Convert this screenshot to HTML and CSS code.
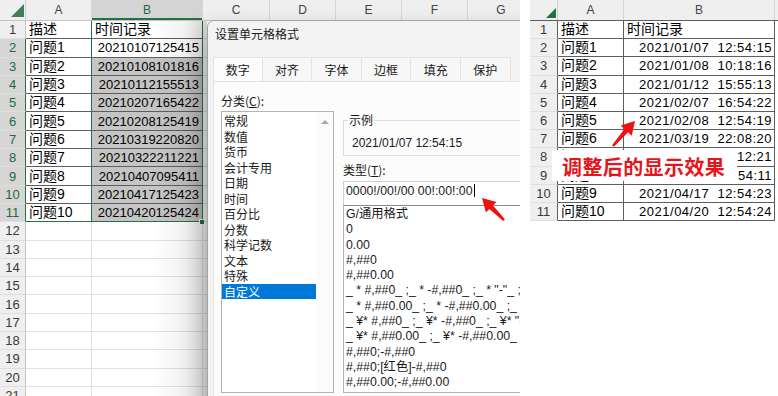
FILE: index.html
```html
<!DOCTYPE html>
<html lang="zh-CN">
<head>
<meta charset="utf-8">
<title>设置单元格格式</title>
<link rel="stylesheet" href="styles.css">
</head>
<body>
<div class="stage">
  <section class="shot left">
    <div class="sheet">
      <div class="hrow">
        <div class="corner"><span class="tri"></span></div>
        <div class="ch w-a">A</div>
        <div class="ch w-b sel">B</div>
        <div class="ch w-x">C</div>
        <div class="ch w-y">D</div>
        <div class="ch w-y">E</div>
        <div class="ch w-y">F</div>
        <div class="ch w-x">G</div>
      </div>
      <div class="row"><div class="rh">1</div><div class="c w-a t gr">描述</div><div class="c w-b t gr">时间记录</div><div class="c w-x"></div></div>
      <div class="row"><div class="rh s">2</div><div class="c w-a t gr">问题1</div><div class="c w-b t gr n">20210107125415</div><div class="c w-x"></div></div>
      <div class="row"><div class="rh s">3</div><div class="c w-a t gr">问题2</div><div class="c w-b t gr n fill">20210108101816</div><div class="c w-x"></div></div>
      <div class="row"><div class="rh s">4</div><div class="c w-a t gr">问题3</div><div class="c w-b t gr n fill">20210112155513</div><div class="c w-x"></div></div>
      <div class="row"><div class="rh s">5</div><div class="c w-a t gr">问题4</div><div class="c w-b t gr n fill">20210207165422</div><div class="c w-x"></div></div>
      <div class="row"><div class="rh s">6</div><div class="c w-a t gr">问题5</div><div class="c w-b t gr n fill">20210208125419</div><div class="c w-x"></div></div>
      <div class="row"><div class="rh s">7</div><div class="c w-a t gr">问题6</div><div class="c w-b t gr n fill">20210319220820</div><div class="c w-x"></div></div>
      <div class="row"><div class="rh s">8</div><div class="c w-a t gr">问题7</div><div class="c w-b t gr n fill">20210322211221</div><div class="c w-x"></div></div>
      <div class="row"><div class="rh s">9</div><div class="c w-a t gr">问题8</div><div class="c w-b t gr n fill">20210407095411</div><div class="c w-x"></div></div>
      <div class="row"><div class="rh s">10</div><div class="c w-a t gr">问题9</div><div class="c w-b t gr n fill">20210417125423</div><div class="c w-x"></div></div>
      <div class="row"><div class="rh s">11</div><div class="c w-a t gr gb">问题10</div><div class="c w-b t gr gb n fill">20210420125424</div><div class="c w-x"></div></div>
      <div class="row"><div class="rh">12</div><div class="c w-a"></div><div class="c w-b"></div><div class="c w-x"></div></div>
      <div class="row"><div class="rh">13</div><div class="c w-a"></div><div class="c w-b"></div><div class="c w-x"></div></div>
      <div class="row"><div class="rh">14</div><div class="c w-a"></div><div class="c w-b"></div><div class="c w-x"></div></div>
      <div class="row"><div class="rh">15</div><div class="c w-a"></div><div class="c w-b"></div><div class="c w-x"></div></div>
      <div class="row"><div class="rh">16</div><div class="c w-a"></div><div class="c w-b"></div><div class="c w-x"></div></div>
      <div class="row"><div class="rh">17</div><div class="c w-a"></div><div class="c w-b"></div><div class="c w-x"></div></div>
      <div class="row"><div class="rh">18</div><div class="c w-a"></div><div class="c w-b"></div><div class="c w-x"></div></div>
      <div class="row"><div class="rh">19</div><div class="c w-a"></div><div class="c w-b"></div><div class="c w-x"></div></div>
      <div class="row"><div class="rh">20</div><div class="c w-a"></div><div class="c w-b"></div><div class="c w-x"></div></div>
      <div class="row"><div class="rh">21</div><div class="c w-a"></div><div class="c w-b"></div><div class="c w-x"></div></div>
    </div>
    <span class="handle"></span>
    <div class="shade"></div>

    <div class="dialog">
      <div class="title">设置单元格格式</div>
      <div class="tabs">
        <div class="tab on">数字</div>
        <div class="tab">对齐</div>
        <div class="tab">字体</div>
        <div class="tab">边框</div>
        <div class="tab">填充</div>
        <div class="tab">保护</div>
      </div>
      <div class="panel">
        <div class="colL">
          <div class="lbl">分类(<u>C</u>):</div>
          <div class="list">
            <div class="items">
              <div class="it">常规</div>
              <div class="it">数值</div>
              <div class="it">货币</div>
              <div class="it">会计专用</div>
              <div class="it">日期</div>
              <div class="it">时间</div>
              <div class="it">百分比</div>
              <div class="it">分数</div>
              <div class="it">科学记数</div>
              <div class="it">文本</div>
              <div class="it">特殊</div>
              <div class="it on">自定义</div>
            </div>
            <div class="sb"><span class="up"></span></div>
          </div>
        </div>
        <div class="colR">
          <fieldset class="grp">
            <legend>示例</legend>
            <div class="sample">2021/01/07 12:54:15</div>
          </fieldset>
          <div class="lbl2">类型(<u>T</u>):</div>
          <div class="inp">0000!/00!/00 00!:00!:00<span class="caret"></span></div>
          <div class="fmts">
            <div class="f">G/通用格式</div>
            <div class="f">0</div>
            <div class="f">0.00</div>
            <div class="f">#,##0</div>
            <div class="f">#,##0.00</div>
            <div class="f">_ * #,##0_ ;_ * -#,##0_ ;_ * "-"_ ;_ @_ </div>
            <div class="f">_ * #,##0.00_ ;_ * -#,##0.00_ ;_ * "-"??_ ;_ @_ </div>
            <div class="f">_ ¥* #,##0_ ;_ ¥* -#,##0_ ;_ ¥* "-"_ ;_ @_ </div>
            <div class="f">_ ¥* #,##0.00_ ;_ ¥* -#,##0.00_ ;_ ¥* "-"??_ ;_ @_ </div>
            <div class="f">#,##0;-#,##0</div>
            <div class="f">#,##0;[红色]-#,##0</div>
            <div class="f">#,##0.00;-#,##0.00</div>
          </div>
        </div>
      </div>
    </div>

    <svg class="arrow" viewBox="0 0 520 396" width="520" height="396" aria-hidden="true">
      <polygon points="482,198 496.5,201.9 493,205.4 504.9,219.2 503.2,220.9 489.4,209 485.9,212.5" fill="#f01010"/>
    </svg>
  </section>

  <section class="shot right">
    <div class="sheet rs">
      <div class="hrow">
        <div class="corner"><span class="tri"></span></div>
        <div class="ch w-ra">A</div>
        <div class="ch w-rb">B</div>
        <div class="ch w-rx"></div>
      </div>
      <div class="row"><div class="rh">1</div><div class="c w-ra t">描述</div><div class="c w-rb t">时间记录</div></div>
      <div class="row"><div class="rh">2</div><div class="c w-ra t">问题1</div><div class="c w-rb t n">2021/01/07  12:54:15</div></div>
      <div class="row"><div class="rh">3</div><div class="c w-ra t">问题2</div><div class="c w-rb t n">2021/01/08  10:18:16</div></div>
      <div class="row"><div class="rh">4</div><div class="c w-ra t">问题3</div><div class="c w-rb t n">2021/01/12  15:55:13</div></div>
      <div class="row"><div class="rh">5</div><div class="c w-ra t">问题4</div><div class="c w-rb t n">2021/02/07  16:54:22</div></div>
      <div class="row"><div class="rh">6</div><div class="c w-ra t">问题5</div><div class="c w-rb t n">2021/02/08  12:54:19</div></div>
      <div class="row"><div class="rh">7</div><div class="c w-ra t">问题6</div><div class="c w-rb t n">2021/03/19  22:08:20</div></div>
      <div class="row"><div class="rh">8</div><div class="c w-ra t">问题7</div><div class="c w-rb t n">2021/03/22  21:12:21</div></div>
      <div class="row"><div class="rh">9</div><div class="c w-ra t">问题8</div><div class="c w-rb t n">2021/04/07  09:54:11</div></div>
      <div class="row"><div class="rh">10</div><div class="c w-ra t">问题9</div><div class="c w-rb t n">2021/04/17  12:54:23</div></div>
      <div class="row"><div class="rh">11</div><div class="c w-ra t">问题10</div><div class="c w-rb t n">2021/04/20  12:54:24</div></div>
    </div>
    <div class="note">调整后的显示效果</div>
    <svg class="arrow" viewBox="0 0 248 396" width="248" height="396" aria-hidden="true">
      <polygon points="105,121 101.7,135.7 98,132.3 83.9,146.8 82.1,145.2 94.4,128.9 90.7,125.5" fill="#f01010"/>
    </svg>
  </section>
</div>
</body>
</html>
```

FILE: styles.css
```css
* { box-sizing: border-box; margin: 0; padding: 0; }
html, body { width: 778px; height: 396px; overflow: hidden; background: #fff; }
body { font-family: "Liberation Sans", "Noto Sans CJK SC", sans-serif; color: #000; }

.stage { display: flex; width: 778px; height: 396px; }
.shot { position: relative; overflow: hidden; height: 396px; flex: none; }
.left { width: 520px; }
.right { width: 248px; margin-left: 10px; }

/* spreadsheet */
.sheet { display: flex; flex-direction: column; }
.hrow { display: flex; flex: none; height: 21px; background: #efefef; border-bottom: 1px solid #c4c4c4; }
.corner { width: 26px; flex: none; display: flex; justify-content: flex-end; align-items: flex-end; padding: 0 1px 3px 0; border-right: 1px solid #d0d0d0; }
.tri { width: 0; height: 0; border-left: 13px solid transparent; border-bottom: 13px solid #3f7f57; }
.ch { flex: none; display: flex; align-items: center; justify-content: center; border-right: 1px solid #d6d6d6; font-size: 12px; color: #444; line-height: 1; }
.ch.sel { background: #d4d4d4; color: #1d6b3c; box-shadow: inset 0 -2px 0 #217346; }
.w-a { width: 66px; }
.w-b { width: 111px; }
.w-x { width: 67px; }
.w-y { width: 66px; }

.row { display: flex; flex: none; height: 18.3px; }
.rh { width: 26px; flex: none; display: flex; align-items: center; justify-content: center; background: #efefef; border-right: 1px solid #c4c4c4; border-bottom: 1px solid #dedede; font-size: 13px; color: #3a3a3a; }
.rh.s { background: #d6d6d6; color: #1d6b3c; border-right-color: #217346; }
.c { flex: none; display: flex; align-items: center; border-right: 1px solid #e1e1e1; border-bottom: 1px solid #e1e1e1; padding: 0 3px; white-space: nowrap; overflow: hidden; font-size: 14px; line-height: 17px; }
.t { border-right-color: #5e5e5e; border-bottom-color: #5e5e5e; }
.n { justify-content: flex-end; font-size: 13px; }
.fill { background: #c5c5c5; }
.gr { border-right-color: #217346; }
.gb { border-bottom-color: #217346; }
.handle { position: absolute; left: 199px; top: 219px; width: 6px; height: 6px; background: #217346; border: 1px solid #fff; }
.shade { position: absolute; left: 155px; top: 21px; width: 52px; height: 375px; background: linear-gradient(to right, rgba(0, 0, 0, 0), rgba(0, 0, 0, .06) 60%, rgba(0, 0, 0, .16)); pointer-events: none; }

/* dialog */
.dialog { position: absolute; left: 207px; top: 20px; width: 345px; height: 400px; background: #f3f3f3; border: 1px solid #a2a2a2; border-radius: 7px 0 0 0; box-shadow: -4px 10px 24px rgba(0, 0, 0, .2); font-family: "Noto Sans CJK SC", "Liberation Sans", sans-serif; font-size: 12px; color: #1a1a1a; }
.title { padding: 5px 0 0 7px; line-height: 16px; }
.tabs { display: flex; margin: 15px 0 0 5px; height: 24px; }
.tab { width: 49.6px; flex: none; height: 24px; display: flex; align-items: center; justify-content: center; background: #f7f7f7; border: 1px solid #e2e2e2; border-left: none; border-bottom: none; }
.tab.on { background: #fcfcfc; border-left: 1px solid #e2e2e2; }
.panel { margin-left: 5px; height: 330px; display: flex; padding: 11px 0 0 7px; background: #fcfcfc; border: 1px solid #e2e2e2; }

.colL { width: 113px; flex: none; }
.lbl { line-height: 16px; height: 16px; margin-bottom: 2px; }
.list { height: 282px; display: flex; background: #fff; border: 1px solid #b4b4b4; }
.items { flex: 1; padding-top: 1px; }
.it { line-height: 15.5px; height: 15.5px; padding-left: 2px; white-space: nowrap; }
.it.on { background: #0078d7; color: #fff; }
.sb { width: 17px; flex: none; display: flex; justify-content: center; padding-top: 8px; background: #fbfbfb; }
.up { width: 0; height: 0; border-left: 4px solid transparent; border-right: 4px solid transparent; border-bottom: 4px solid #a8a8a8; }

.colR { width: 200px; flex: none; margin-left: 9px; }
.grp { margin-top: 19px; border: 1px solid #dcdcdc; padding: 7px 4px 4px; }
.grp legend { padding: 0 1px; line-height: 16px; }
.sample { font-family: "Liberation Sans", sans-serif; font-size: 12px; line-height: 16px; margin-left: 4px; }
.lbl2 { line-height: 16px; margin-top: 6px; }
.inp { margin-top: 3px; height: 24px; background: #fff; border: 1px solid #cfcfcf; border-bottom: none; padding: 1px 0 0 2px; font-family: "Liberation Sans", sans-serif; font-size: 12.3px; line-height: 16px; white-space: nowrap; }
.caret { display: inline-block; width: 1px; height: 13px; background: #000; vertical-align: -2px; margin-left: 1px; }
.fmts { height: 188px; background: #fff; border: 1px solid #b4b4b4; border-top-color: #8a8a8a; padding-top: 1px; font-family: "Liberation Sans", "Noto Sans CJK SC", sans-serif; font-size: 12.3px; }
.f { line-height: 15.3px; height: 15.3px; padding-left: 2px; white-space: pre; }

.arrow { position: absolute; left: 0; top: 0; pointer-events: none; }

/* right sheet */
.rs .corner { width: 28px; padding: 0 1px 2px 0; }
.rs .tri { border-left-width: 10px; border-bottom-width: 10px; border-bottom-color: #217346; }
.rs .hrow { border-bottom-color: #5e5e5e; }
.w-ra { width: 66px; }
.w-rb { width: 151px; }
.w-rx { width: 3px; border-right: none; }
.rs .row { height: 18.2px; }
.rs .rh { width: 28px; border-right-color: #5e5e5e; }
.rs .n { font-size: 13px; letter-spacing: .5px; white-space: pre; padding-right: 2px; }
.note { position: absolute; left: 22px; top: 150px; width: 185px; height: 31px; background: #fff; color: #e8141c; font-family: "Noto Sans CJK SC", sans-serif; font-weight: 700; font-size: 20px; letter-spacing: .4px; line-height: 28px; padding: 3px 0 0 10px; white-space: nowrap; }
```
